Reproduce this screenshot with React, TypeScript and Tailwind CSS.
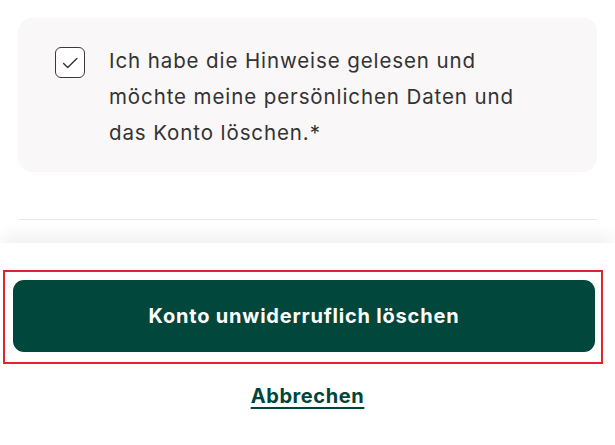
import React from "react";

export default function App() {
  return (
    <div
      className="min-h-[445px] w-[615px] bg-white text-[#333333]"
      style={{ fontFamily: "Inter, 'Open Sans', sans-serif" }}
    >
      <div className="px-[18px] pt-[18px]">
        <label className="flex items-start gap-6 rounded-[14px] bg-[#f9f7f7] pl-[37px] pr-6 pt-[25px] pb-[21px]">
          <span className="mt-[4px] flex h-[31px] w-[30px] shrink-0 items-center justify-center rounded-[6px] border-[1.5px] border-[#3a3a3a] bg-white">
            <svg width="22" height="22" viewBox="0 0 24 24" fill="none" stroke="#333" strokeWidth="1.5" strokeLinecap="round" strokeLinejoin="round">
              <path d="M5 12.5l4.5 4.5L19.5 7" />
            </svg>
          </span>
          <span className="text-[20.5px] leading-[36px] tracking-[0.9px]">
            Ich habe die Hinweise gelesen und
            <br />
            möchte meine persönlichen Daten und
            <br />
            das Konto löschen.*
          </span>
        </label>
        <div className="mt-[47px] h-px bg-[#e9e9e9]" />
      </div>

      <div className="mt-[23px] bg-white pb-[30px] pt-[27px] shadow-[0_-10px_16px_-2px_rgba(0,0,0,0.06)]">
        <div className="mx-[3px] w-[600px] border-2 border-[#e02531] pl-[8px] pr-[6px] pt-[8px] pb-[10px]">
          <button className="flex h-[72px] w-full items-center justify-center rounded-[11px] bg-[#01473c] text-[20px] font-bold tracking-[0.8px] text-white">
            Konto unwiderruflich löschen
          </button>
        </div>
        <div className="mt-[17px] flex justify-center">
          <a
            href="#"
            className="text-[20px] font-bold tracking-[0.6px] text-[#00453a] underline decoration-2 underline-offset-[4px]"
          >
            Abbrechen
          </a>
        </div>
      </div>
    </div>
  );
}
